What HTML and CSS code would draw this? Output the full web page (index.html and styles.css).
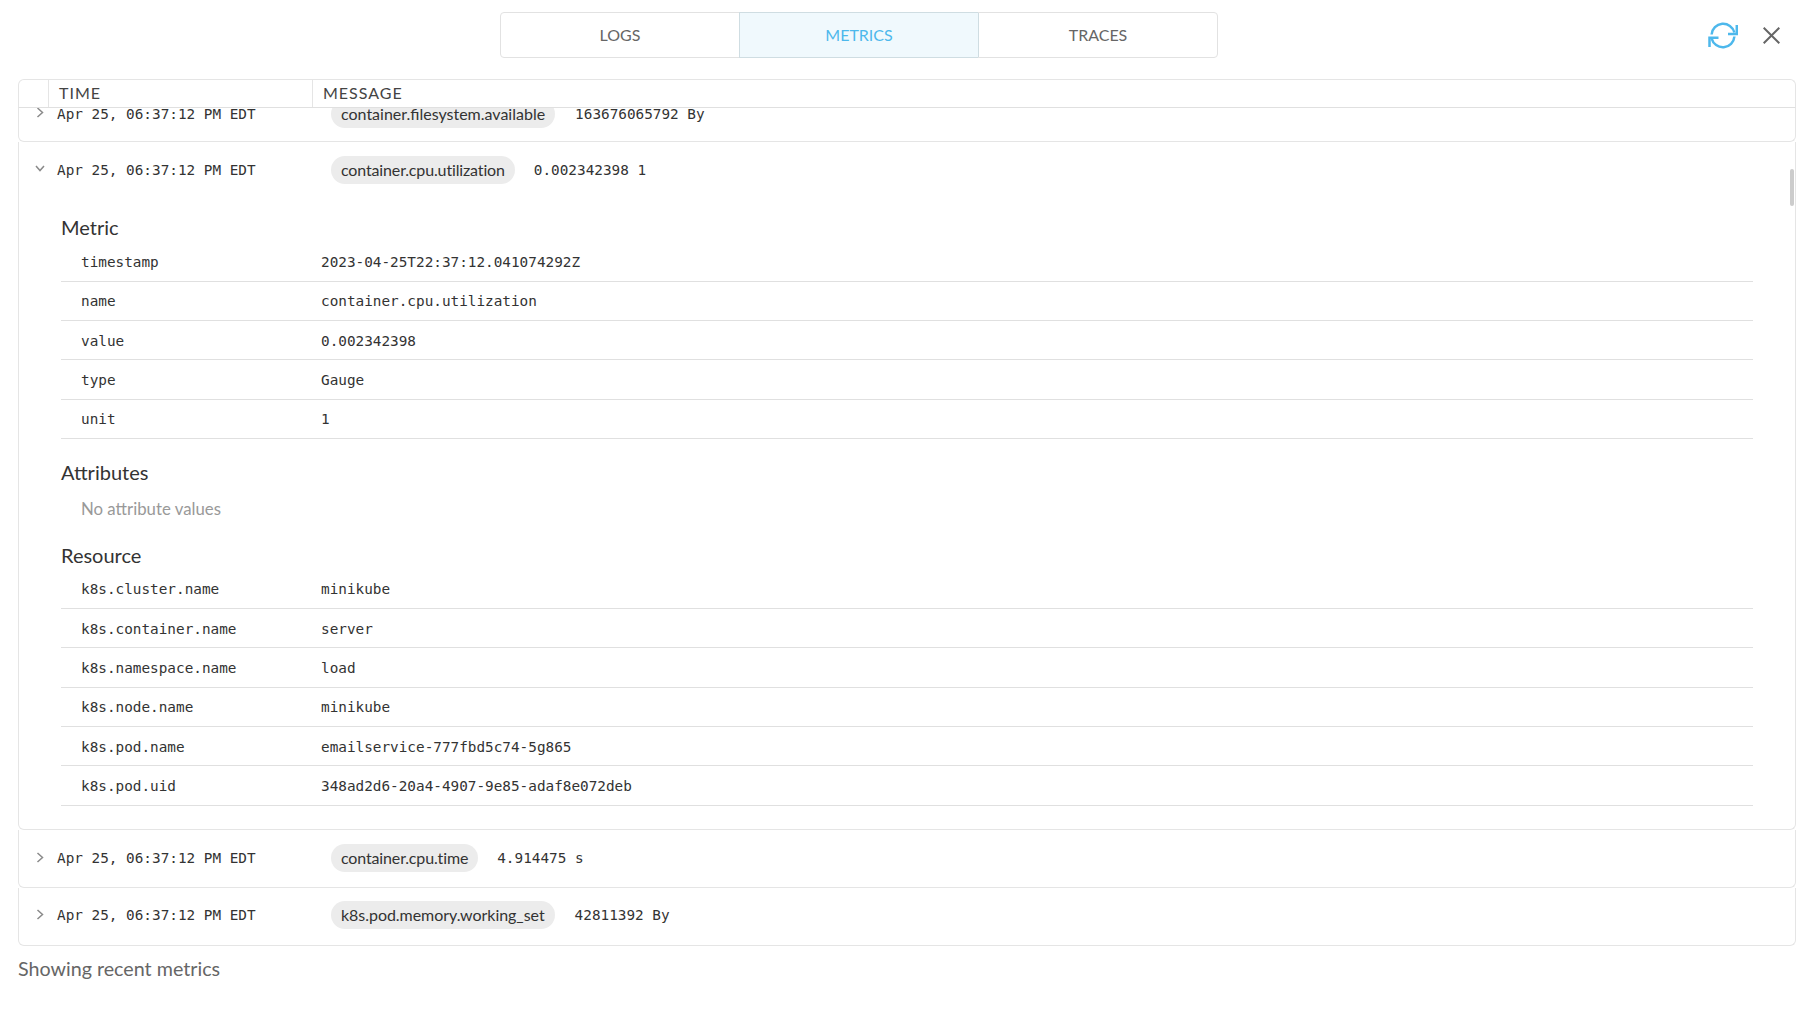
FILE: index.html
```html
<!DOCTYPE html>
<html lang="en">
<head>
<meta charset="utf-8">
<title>Metrics</title>
<link rel="stylesheet" href="styles.css">
</head>
<body>
<header class="topbar">
  <nav class="tabs">
    <div class="tab">LOGS</div>
    <div class="tab active">METRICS</div>
    <div class="tab">TRACES</div>
  </nav>
  <div class="actions">
    <svg class="refresh" viewBox="0 0 30 28" width="30" height="28" fill="none" stroke="#4db8ec" stroke-width="2.5">
      <path d="M3.6 13.5A11.6 11.6 0 0 1 26.4 11.5"/>
      <path d="M26.4 15.5A11.6 11.6 0 0 1 3.6 17.5"/>
      <path d="M28.8 4V13H20"/>
      <path d="M1.5 26V16.8H10.5"/>
    </svg>
    <svg class="close" viewBox="0 0 17 17" width="17" height="17" fill="none" stroke="#666" stroke-width="2">
      <path d="M.7 .7L16.3 16.3M16.3 .7L.7 16.3"/>
    </svg>
  </div>
</header>

<main class="panel">
  <div class="head">
    <div class="hcell hexp"></div>
    <div class="hcell htime">TIME</div>
    <div class="hcell hmsg">MESSAGE</div>
  </div>
  <div class="body">
    <div class="scrollbar"></div>
    <div class="row first">
      <svg class="chev" viewBox="0 0 8 11" width="8" height="11"><path d="M1.5 1L6.5 5.5L1.5 10"/></svg>
      <span class="time">Apr 25, 06:37:12 PM EDT</span>
      <span class="pill">container.filesystem.available</span>
      <span class="val">163676065792 By</span>
    </div>
    <div class="group">
      <div class="row open">
        <svg class="chev down" viewBox="0 0 10 7" width="10" height="7"><path d="M1 1L5 5.5L9 1"/></svg>
        <span class="time">Apr 25, 06:37:12 PM EDT</span>
        <span class="pill tight">container.cpu.utilization</span>
        <span class="val">0.002342398 1</span>
      </div>
      <section class="detail">
        <h3 class="title">Metric</h3>
        <div class="kv"><span class="k">timestamp</span><span class="v">2023-04-25T22:37:12.041074292Z</span></div>
        <div class="kv"><span class="k">name</span><span class="v">container.cpu.utilization</span></div>
        <div class="kv"><span class="k">value</span><span class="v">0.002342398</span></div>
        <div class="kv"><span class="k">type</span><span class="v">Gauge</span></div>
        <div class="kv"><span class="k">unit</span><span class="v">1</span></div>
        <h3 class="title second">Attributes</h3>
        <p class="none">No attribute values</p>
        <h3 class="title third">Resource</h3>
        <div class="kv"><span class="k">k8s.cluster.name</span><span class="v">minikube</span></div>
        <div class="kv"><span class="k">k8s.container.name</span><span class="v">server</span></div>
        <div class="kv"><span class="k">k8s.namespace.name</span><span class="v">load</span></div>
        <div class="kv"><span class="k">k8s.node.name</span><span class="v">minikube</span></div>
        <div class="kv"><span class="k">k8s.pod.name</span><span class="v">emailservice-777fbd5c74-5g865</span></div>
        <div class="kv"><span class="k">k8s.pod.uid</span><span class="v">348ad2d6-20a4-4907-9e85-adaf8e072deb</span></div>
      </section>
    </div>
    <div class="row">
      <svg class="chev" viewBox="0 0 8 11" width="8" height="11"><path d="M1.5 1L6.5 5.5L1.5 10"/></svg>
      <span class="time">Apr 25, 06:37:12 PM EDT</span>
      <span class="pill tight">container.cpu.time</span>
      <span class="val">4.914475 s</span>
    </div>
    <div class="row last">
      <svg class="chev" viewBox="0 0 8 11" width="8" height="11"><path d="M1.5 1L6.5 5.5L1.5 10"/></svg>
      <span class="time">Apr 25, 06:37:12 PM EDT</span>
      <span class="pill">k8s.pod.memory.working_set</span>
      <span class="val">42811392 By</span>
    </div>
  </div>
</main>
<footer class="foot">Showing recent metrics</footer>
</body>
</html>
```
FILE: styles.css
```css
* { box-sizing: border-box; }
html, body { margin: 0; height: 100%; background: #fff; }
body { padding: 0 18px; font-family: Lato, sans-serif; color: #333; overflow: hidden; }

.topbar { position: relative; height: 79px; padding-top: 12px; }
.tabs { display: flex; height: 46px; width: 718px; margin-left: 482px; border: 1px solid #e2e2e2; border-radius: 4px; }
.tab { flex: 1; display: flex; align-items: center; justify-content: center; padding-bottom: 2px; font-size: 16px; color: #666; }
.tab + .tab { border-left: 1px solid #e2e2e2; }
.tab.active { background: #f0f9fd; color: #4db8ec; border-left-color: #cfdde2; box-shadow: 0 -1px 0 #cfdde2, 0 1px 0 #cfdde2; }
.tab.active + .tab { border-left-color: #cfdde2; }
.actions { position: absolute; right: 17px; top: 21px; display: flex; align-items: center; gap: 25px; }
.refresh, .close { display: block; }

.panel { width: 1778px; }
.head { display: flex; height: 29px; border: 1px solid #e5e5e5; border-bottom-color: #e0e0e0; border-radius: 6px 6px 0 0; }
.hcell { font-size: 16px; letter-spacing: 1px; color: #444; display: flex; align-items: center; padding: 0 0 2px 10px; }
.hexp { width: 29px; }
.htime { width: 264px; border-left: 1px solid #e5e5e5; }
.hmsg { border-left: 1px solid #e5e5e5; }

.body { position: relative; height: 838px; overflow: hidden; }
.scrollbar { position: absolute; right: 2px; top: 61px; width: 4px; height: 37px; background: #ccc; border-radius: 2px; }
.row, .group { border: 1px solid #e5e5e5; border-top: 0; border-radius: 0 0 6px 6px; }
.row { display: flex; align-items: center; height: 58px; padding: 0 0 2px 17px; font-family: "DejaVu Sans Mono", monospace; font-size: 14.35px; color: #333; }
.row.first { margin-top: -21px; height: 55px; padding-bottom: 0; }
.row.open { border: 0; height: 57px; border-radius: 0; }
.row.last { padding-bottom: 4px; }
.chev { flex: none; align-self: flex-start; margin: 22px 13px 0 0; fill: none; stroke: #8a8a8a; stroke-width: 1.5; }
.first .chev { margin-top: 20px; }
.last .chev { margin-top: 21px; }
.chev.down { margin: 23px 12px 0 -1px; }
.time { width: 274px; }
.pill { height: 28px; display: inline-flex; align-items: center; padding: 0 10px 1px; border-radius: 14px; background: #ececec; font-family: Lato, sans-serif; font-size: 16px; color: #333; margin-right: 20px; }
.pill.tight { letter-spacing: -0.14px; margin-right: 19px; }
.last .pill { letter-spacing: -0.04px; }

.detail { padding: 14.5px 42px 23.4px 42px; }
.title { margin: 0 0 2.7px; font-size: 20px; font-weight: 400; color: #333; line-height: 26px; }
.title.second { margin: 20px 0 0; }
.title.third { margin: 22px 0 1.9px; }
.kv { display: flex; align-items: center; height: 39.33px; padding: 1px 0 0 20px; border-bottom: 1px solid #e0e0e0; font-family: "DejaVu Sans Mono", monospace; font-size: 14.35px; color: #333; }
.k { width: 240px; }
.none { margin: 13px 0 0 20px; font-size: 16.8px; color: #999; line-height: 22px; }

.foot { margin-top: 10px; font-size: 19.7px; color: #666; line-height: 26px; }
```
